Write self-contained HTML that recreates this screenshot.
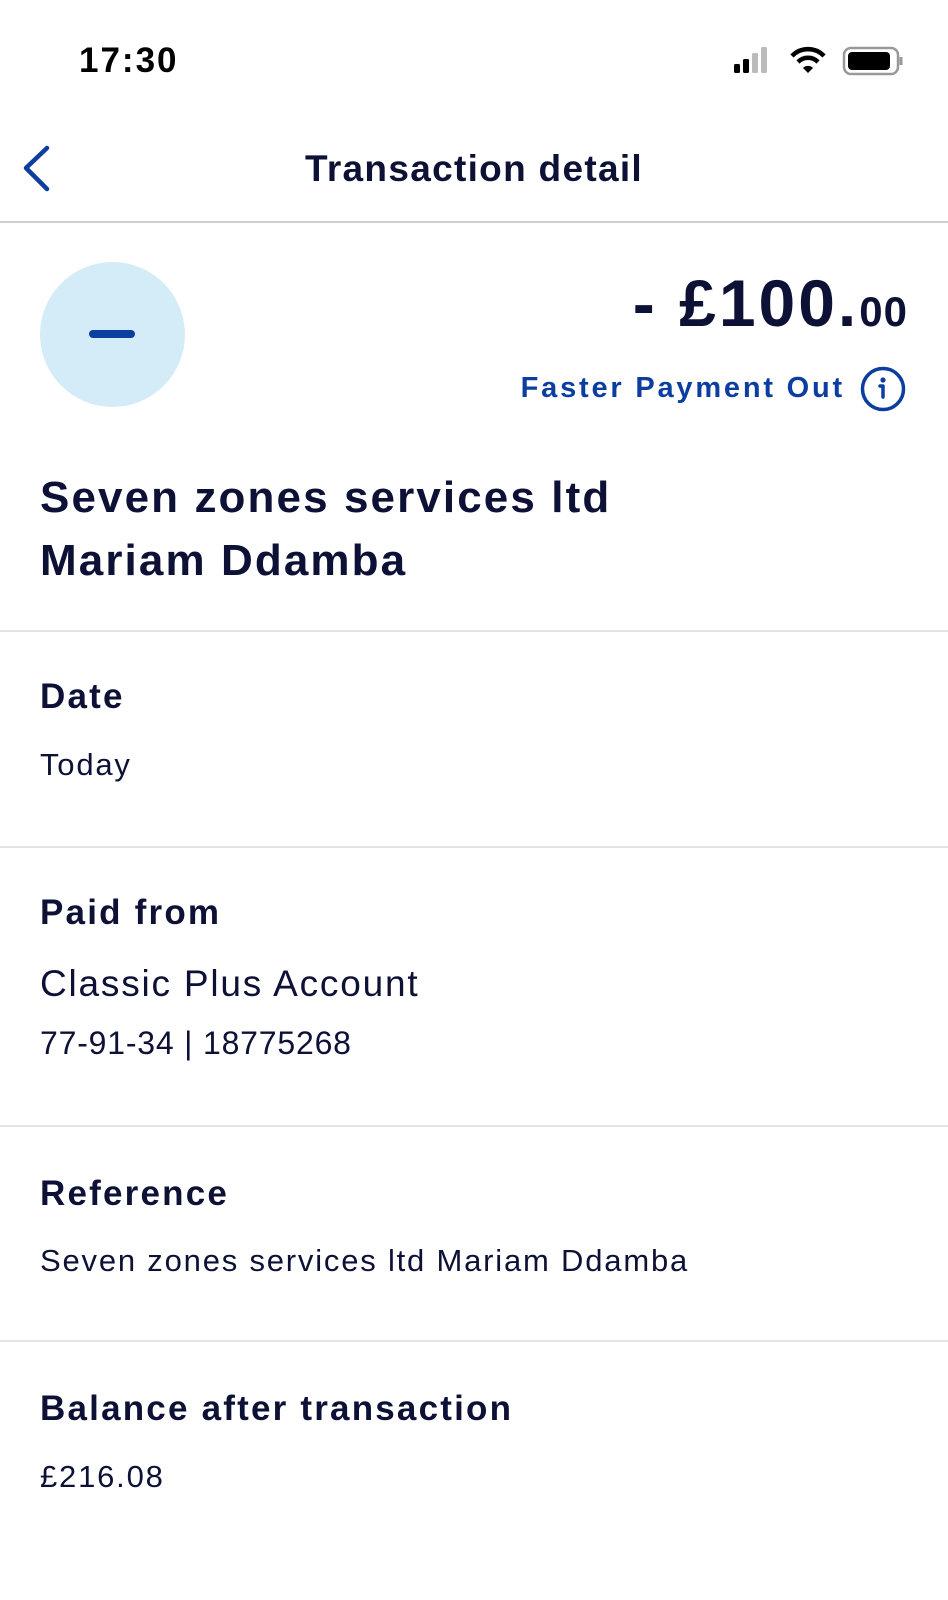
<!DOCTYPE html>
<html><head><meta charset="utf-8"><style>
html,body{margin:0;padding:0;background:#fff;width:948px;height:1600px;overflow:hidden;position:relative;font-family:"Liberation Sans",sans-serif;color:#0d1136}
.t{position:absolute;white-space:nowrap;line-height:1}
.hr{position:absolute;left:0;width:948px;height:2px;background:#e3e3e6}
.lbl{font-size:35px;font-weight:bold;left:40px;letter-spacing:2.2px}
.val{font-size:31px;left:40px;letter-spacing:1.8px}
</style></head><body>
<div class="t" style="left:79px;top:43px;font-size:35px;font-weight:bold;color:#000;letter-spacing:2px">17:30</div>
<svg style="position:absolute;left:730px;top:44px" width="175" height="34" viewBox="0 0 175 34">
<rect x="4" y="20" width="6" height="9" rx="1.5" fill="#000"/>
<rect x="13" y="15" width="6" height="14" rx="1.5" fill="#000"/>
<rect x="22" y="9" width="6" height="20" rx="1.5" fill="#bbb"/>
<rect x="31" y="3" width="6" height="26" rx="1.5" fill="#bbb"/>
<g transform="translate(12,0)">
<path d="M50 12 A22 22 0 0 1 82 12" stroke="#000" stroke-width="4.5" fill="none"/>
<path d="M56 18 A14 14 0 0 1 76 18" stroke="#000" stroke-width="4.5" fill="none"/>
<path d="M61 24 L66 29 L71 24 A7 7 0 0 0 61 24Z" fill="#000"/>
</g>
<rect x="114" y="4" width="54" height="26" rx="7" fill="none" stroke="#999" stroke-width="2.5"/>
<rect x="118" y="8" width="42" height="18" rx="4" fill="#000"/>
<path d="M171 13 v8" stroke="#999" stroke-width="3"/>
</svg>
<svg style="position:absolute;left:20px;top:144px" width="32" height="48"><path d="M27 4 L6 24 L27 45" stroke="#0b3ea0" stroke-width="4.5" fill="none" stroke-linecap="round" stroke-linejoin="round"/></svg>
<div class="t" style="left:0;width:948px;text-align:center;top:150px;font-size:37px;font-weight:bold;letter-spacing:1.3px">Transaction detail</div>
<div class="hr" style="top:221px;background:#cfcfd3"></div>
<div style="position:absolute;left:40px;top:262px;width:145px;height:145px;border-radius:50%;background:#d4ecf7"></div>
<div style="position:absolute;left:89px;top:330px;width:46px;height:8px;border-radius:4px;background:#0b3ea0"></div>
<div class="t" style="right:40px;top:270px;font-size:66px;font-weight:bold;letter-spacing:3px">- £100.<span style="font-size:42px;letter-spacing:1px">00</span></div>
<div class="t" style="right:103px;top:374px;font-size:29px;font-weight:bold;color:#0b3ea0;letter-spacing:2.8px">Faster Payment Out</div>
<svg style="position:absolute;left:859px;top:365px" width="48" height="48"><circle cx="24" cy="24" r="20.5" stroke="#0b3ea0" stroke-width="3.5" fill="none"/><circle cx="24" cy="15" r="2.6" fill="#0b3ea0"/><path d="M21 21h3v11" stroke="#0b3ea0" stroke-width="3.5" fill="none" stroke-linecap="round" stroke-linejoin="round"/></svg>
<div class="t" style="left:40px;top:476px;font-size:44px;font-weight:bold;letter-spacing:2.1px">Seven zones services ltd</div>
<div class="t" style="left:40px;top:539px;font-size:44px;font-weight:bold;letter-spacing:2.1px">Mariam Ddamba</div>
<div class="hr" style="top:630px"></div>
<div class="t lbl" style="top:679px">Date</div>
<div class="t val" style="top:749px">Today</div>
<div class="hr" style="top:846px"></div>
<div class="t lbl" style="top:895px">Paid from</div>
<div class="t" style="left:40px;top:965px;font-size:37px;letter-spacing:1.8px">Classic Plus Account</div>
<div class="t" style="left:40px;top:1027px;font-size:32px;letter-spacing:0.8px">77-91-34 | 18775268</div>
<div class="hr" style="top:1125px"></div>
<div class="t lbl" style="top:1176px">Reference</div>
<div class="t val" style="top:1245px">Seven zones services ltd Mariam Ddamba</div>
<div class="hr" style="top:1340px"></div>
<div class="t lbl" style="top:1391px">Balance after transaction</div>
<div class="t val" style="top:1461px">£216.08</div>
</body></html>
